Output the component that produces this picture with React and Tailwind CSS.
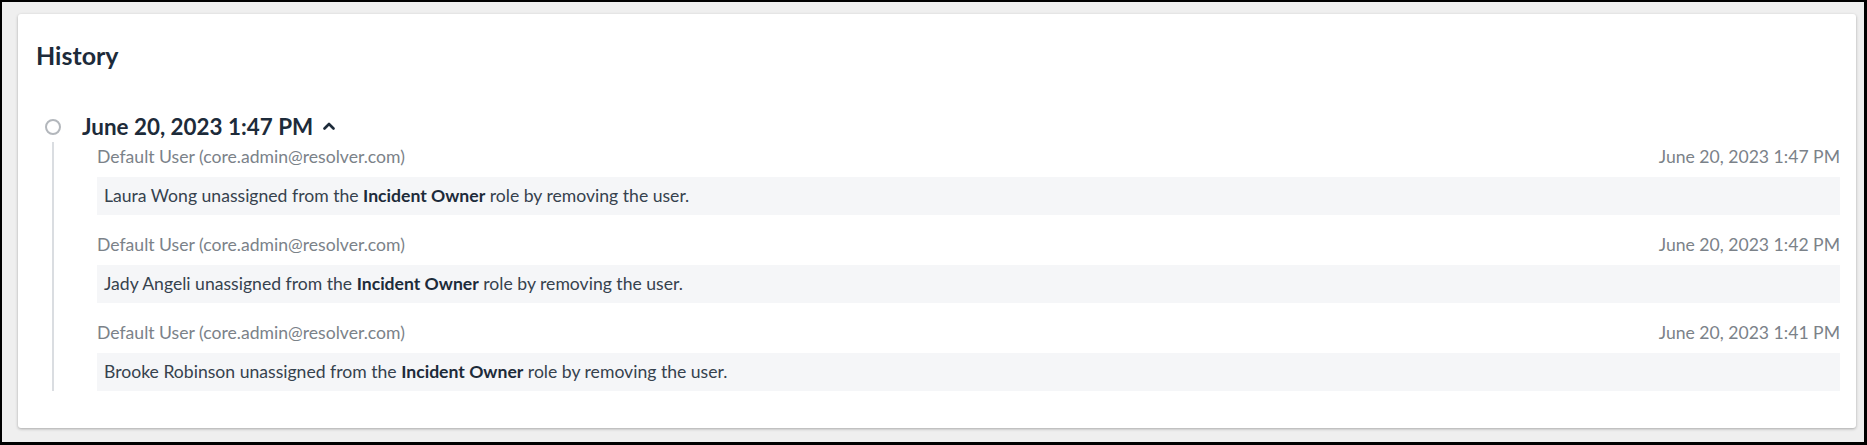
const ENTRIES = [
  { name: 'Laura Wong', time: 'June 20, 2023 1:47 PM' },
  { name: 'Jady Angeli', time: 'June 20, 2023 1:42 PM' },
  { name: 'Brooke Robinson', time: 'June 20, 2023 1:41 PM' },
]

function Caret() {
  return (
    <svg width="12" height="8" viewBox="0 0 12 8" className="ml-[10px] mt-[-2px]">
      <polyline points="1.5,6.5 6,2 10.5,6.5" fill="none" stroke="#1d2b3a" strokeWidth="2.6" strokeLinecap="round" strokeLinejoin="round" />
    </svg>
  )
}

export default function App() {
  return (
    <div className="h-[445px] w-full border-l-2 border-t-2 border-r-[3px] border-b-[3px] border-black bg-[#efefef] font-['Lato',sans-serif]">
      <div className="ml-[16px] mt-[12px] w-[1838px] rounded-[3px] bg-white pl-[18px] pr-[16px] pt-[25px] pb-[37px] shadow-[0_1px_3px_rgba(0,0,0,0.3)]">
        <h2 className="text-[25px] leading-[32px] font-bold text-[#1d2b3a]">History</h2>

        <div className="ml-[9px] mt-[41px]">
          {/* group header */}
          <div className="flex h-[30px] items-center">
            <span className="h-4 w-4 rounded-full border-2 border-[#b3b7bc]" />
            <span className="ml-[21px] text-[22.4px] leading-[30px] font-bold text-[#1d2b3a]">June 20, 2023 1:47 PM</span>
            <Caret />
          </div>

          {/* entries */}
          <div className="ml-[7px] border-l-2 border-[#dadde1] pl-[43px] pt-[3px]">
            {ENTRIES.map((e, i) => (
              <div key={e.time} className={i > 0 ? 'mt-[18px]' : ''}>
                <div className="flex justify-between text-[17.6px] leading-[24px] text-[#7b8289]">
                  <span>Default User (core.admin@resolver.com)</span>
                  <span>{e.time}</span>
                </div>
                <div className="mt-[8px] flex h-[38px] items-center bg-[#f5f6f8] pl-[7px] text-[17.6px] text-[#36424e]">
                  <span>
                    {e.name} unassigned from the <b className="font-bold text-[#1d2b3a]">Incident Owner</b> role by removing the user.
                  </span>
                </div>
              </div>
            ))}
          </div>
        </div>
      </div>
    </div>
  )
}
